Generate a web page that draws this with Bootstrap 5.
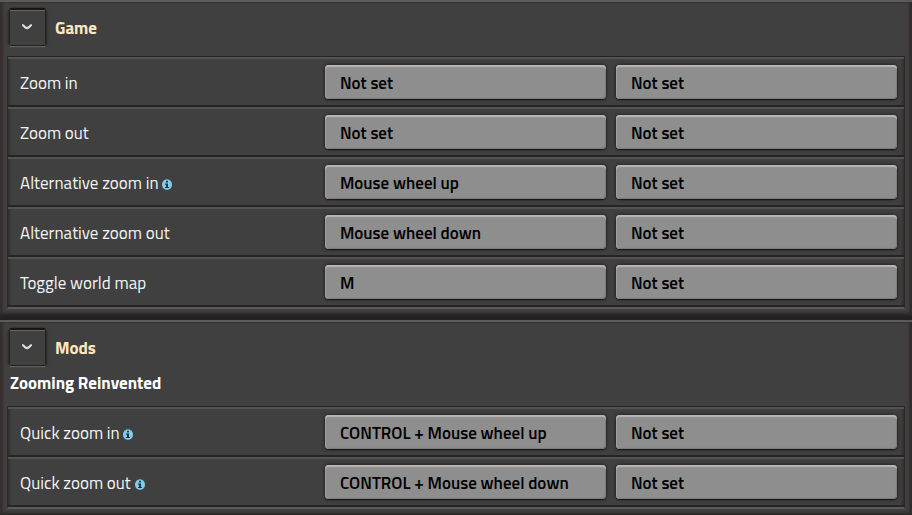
<!DOCTYPE html>
<html lang="en">
<head>
<meta charset="utf-8">
<meta name="viewport" content="width=device-width, initial-scale=1">
<title>Controls</title>
<link href="https://cdn.jsdelivr.net/npm/bootstrap@5.3.0/dist/css/bootstrap.min.css" rel="stylesheet">
<style>
body { background: #222; color: #f4f4f4; font-family: "Titillium Web", Roboto, sans-serif; font-size: 17px; line-height: 24px; }
.panel { background: #404040; border-top: 2px solid #5d5b59; border-bottom: 2px solid #2b2727; padding: 0 7px 5px; box-shadow: inset 3px 0 2px #372f2d, inset -3px 0 2px #342c2a, inset 0 -2px 2px #383434; }
.panel-head { height: 54px; padding: 8px 3px 0; }
.panel-head h2 { color: #ffe6c0; font-size: 17px; line-height: 36px; font-weight: 700; margin-left: 10px; }
.mod-name { font-size: 17px; line-height: 24px; font-weight: 700; color: #fff; padding: 0 3px; margin-top: -5px; height: 35px; }
.fold { width: 35px; height: 35px; background: #414040; border: 0; border-radius: 0; box-shadow: inset 0 1px #686563, 0 -2px 1px #191716, -2px 0 2px #2b2422, 2px 0 2px #2b2422, 0 1px #1e1c1b, 0 2px 1px #716d6a; }
.fold svg { margin: 0 2px 1px 0; }
.fold:hover { background: #4a4949; }
.bindings { border: 1px solid #2b2828; border-top-color: #262424; border-bottom: 2px solid #5c5a59; box-shadow: inset 2px 0 2px #353131, inset -2px 0 2px #353131; }
.binding { height: 50px; padding: 0 7px 0 12px; border-top: 2px solid #545352; border-bottom: 2px solid #262424; }
.binding-label { width: 305px; padding-top: 2px; }
.keys { gap: 10px; }
.key { flex: 1 1 0; height: 34px; padding: 1px 15px 0; border: 0; border-radius: 4px; background: #8e8e8e; color: #000; font-size: 17px; line-height: 34px; font-weight: 600; box-shadow: inset 0 2px 1px #bbb5b5, inset 1px 0 1px #a09c9c, inset -1px -1px 1px #777, 0 1px 1px #171515, 0 0 3px 1px #2d2828; }
.key:hover { background: #a09f9f; color: #000; }
</style>
<script defer src="https://cdn.jsdelivr.net/npm/bootstrap@5.3.0/dist/js/bootstrap.bundle.min.js"></script>
</head>
<body>
<svg class="d-none" aria-hidden="true">
  <symbol id="info" viewBox="0 0 10 11"><ellipse cx="5" cy="5.5" rx="5" ry="5.3" fill="#80ceed"/><path d="M4 1.8h2v1.8H4zM3 4.500h3v3.400h1v1.200H3V7.900h1V5.700H3z" fill="#26343b"/></symbol>
  <symbol id="chevron" viewBox="0 0 12 8"><path d="M2 2.200L4.300 4.300Q6 5.700 7.700 4.300L10 2.200" fill="none" stroke="#deddda" stroke-width="2.200" stroke-linecap="round"/></symbol>
</svg>
<main class="d-flex flex-column gap-1">
  <section class="panel">
    <header class="panel-head d-flex align-items-start">
      <button class="fold btn p-0 d-flex align-items-center justify-content-center" type="button" aria-label="Collapse Game" data-bs-toggle="collapse" data-bs-target="#game"><svg width="12" height="8"><use href="#chevron"/></svg></button>
      <h2 class="mb-0">Game</h2>
    </header>
    <div id="game" class="bindings collapse show">
      <div class="binding d-flex align-items-center"><span class="binding-label flex-shrink-0">Zoom in</span><div class="d-flex flex-grow-1 keys"><button type="button" class="key btn text-start">Not set</button><button type="button" class="key btn text-start">Not set</button></div></div>
      <div class="binding d-flex align-items-center"><span class="binding-label flex-shrink-0">Zoom out</span><div class="d-flex flex-grow-1 keys"><button type="button" class="key btn text-start">Not set</button><button type="button" class="key btn text-start">Not set</button></div></div>
      <div class="binding d-flex align-items-center"><span class="binding-label flex-shrink-0">Alternative zoom in <svg width="10" height="11" role="img" aria-label="More information"><use href="#info"/></svg></span><div class="d-flex flex-grow-1 keys"><button type="button" class="key btn text-start">Mouse wheel up</button><button type="button" class="key btn text-start">Not set</button></div></div>
      <div class="binding d-flex align-items-center"><span class="binding-label flex-shrink-0">Alternative zoom out</span><div class="d-flex flex-grow-1 keys"><button type="button" class="key btn text-start">Mouse wheel down</button><button type="button" class="key btn text-start">Not set</button></div></div>
      <div class="binding d-flex align-items-center"><span class="binding-label flex-shrink-0">Toggle world map</span><div class="d-flex flex-grow-1 keys"><button type="button" class="key btn text-start">M</button><button type="button" class="key btn text-start">Not set</button></div></div>
    </div>
  </section>
  <section class="panel">
    <header class="panel-head d-flex align-items-start">
      <button class="fold btn p-0 d-flex align-items-center justify-content-center" type="button" aria-label="Collapse Mods" data-bs-toggle="collapse" data-bs-target="#mods"><svg width="12" height="8"><use href="#chevron"/></svg></button>
      <h2 class="mb-0">Mods</h2>
    </header>
    <h3 class="mod-name mb-0">Zooming Reinvented</h3>
    <div id="mods" class="bindings collapse show">
      <div class="binding d-flex align-items-center"><span class="binding-label flex-shrink-0">Quick zoom in <svg width="10" height="11" role="img" aria-label="More information"><use href="#info"/></svg></span><div class="d-flex flex-grow-1 keys"><button type="button" class="key btn text-start">CONTROL + Mouse wheel up</button><button type="button" class="key btn text-start">Not set</button></div></div>
      <div class="binding d-flex align-items-center"><span class="binding-label flex-shrink-0">Quick zoom out <svg width="10" height="11" role="img" aria-label="More information"><use href="#info"/></svg></span><div class="d-flex flex-grow-1 keys"><button type="button" class="key btn text-start">CONTROL + Mouse wheel down</button><button type="button" class="key btn text-start">Not set</button></div></div>
    </div>
  </section>
</main>
</body>
</html>
